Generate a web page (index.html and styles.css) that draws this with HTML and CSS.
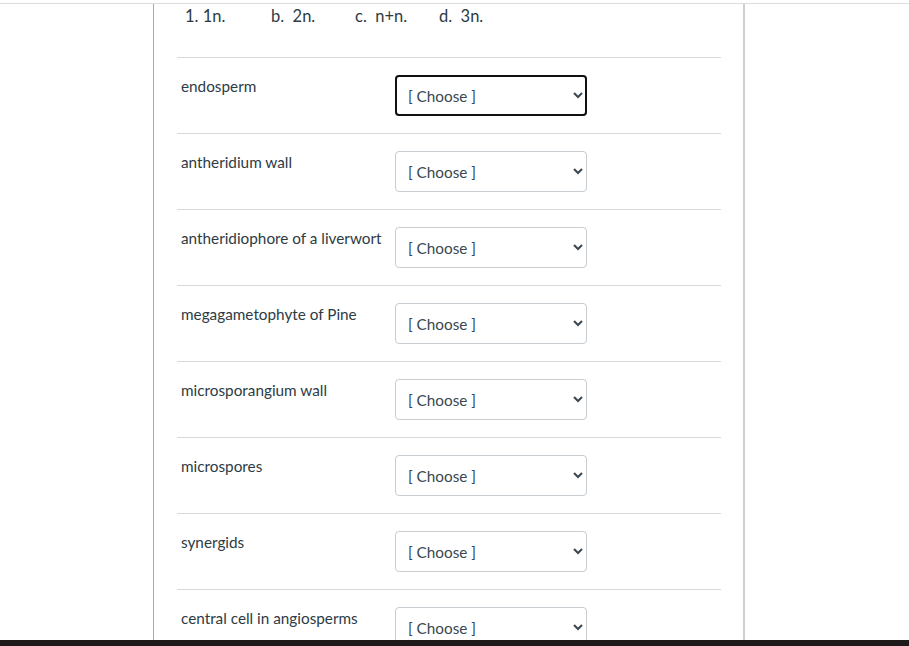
FILE: index.html
```html
<!DOCTYPE html>
<html lang="en">
<head>
<meta charset="utf-8">
<title>Matching question</title>
<link rel="stylesheet" href="styles.css">
</head>
<body>
<div class="topline"></div>
<div class="question">
  <div class="options">
    <span class="opt opt-1">1. 1n.</span>
    <span class="opt opt-b">b.&nbsp; 2n.</span>
    <span class="opt opt-c">c.&nbsp; n+n.</span>
    <span class="opt opt-d">d.&nbsp; 3n.</span>
  </div>
  <div class="rows">
    <div class="row">
      <label class="term">endosperm</label>
      <select class="choice focused"><option>[ Choose ]</option></select>
    </div>
    <div class="row">
      <label class="term">antheridium wall</label>
      <select class="choice"><option>[ Choose ]</option></select>
    </div>
    <div class="row">
      <label class="term">antheridiophore of a liverwort</label>
      <select class="choice"><option>[ Choose ]</option></select>
    </div>
    <div class="row">
      <label class="term">megagametophyte of Pine</label>
      <select class="choice"><option>[ Choose ]</option></select>
    </div>
    <div class="row">
      <label class="term">microsporangium wall</label>
      <select class="choice"><option>[ Choose ]</option></select>
    </div>
    <div class="row">
      <label class="term">microspores</label>
      <select class="choice"><option>[ Choose ]</option></select>
    </div>
    <div class="row">
      <label class="term">synergids</label>
      <select class="choice"><option>[ Choose ]</option></select>
    </div>
    <div class="row">
      <label class="term">central cell in angiosperms</label>
      <select class="choice"><option>[ Choose ]</option></select>
    </div>
  </div>
</div>
<div class="taskbar"></div>
</body>
</html>
```

FILE: styles.css
```css
html, body {
  margin: 0;
  padding: 0;
  background: #ffffff;
  font-family: Lato, "Open Sans", sans-serif;
  color: #2d3b45;
  overflow: hidden;
  height: 646px;
}

.topline {
  height: 3px;
  border-bottom: 1px solid #dcdcdc;
}

.question {
  box-sizing: border-box;
  margin-left: 153px;
  width: 592px;
  border-left: 1px solid #a8a8a8;
  border-right: 2px solid #cfcfcf;
  padding: 0 22px 0 23px;
  min-height: 700px;
}

.options {
  display: flex;
  font-size: 16.5px;
  line-height: 24px;
  padding: 0 0 29px 8px;
  color: #2d3b45;
}

.opt-1 { width: 86px; }
.opt-b { width: 84px; }
.opt-c { width: 84px; }

.row {
  display: flex;
  align-items: flex-start;
  border-top: 1px solid #d7dadd;
  padding: 17px 0 17px 0;
}

.term {
  width: 214px;
  padding: 1px 0 0 4px;
  font-size: 15.3px;
  line-height: 20px;
  color: #2d3b45;
}

.choice {
  width: 192px;
  height: 41px;
  margin: 0;
  padding: 0 6px 0 8px;
  font-family: Lato, "Open Sans", sans-serif;
  font-size: 15.3px;
  color: #3a4750;
  background: #ffffff;
  border: 1px solid #c7cdd1;
  border-radius: 4px;
}

.choice.focused {
  outline: 2px solid #111111;
  outline-offset: -2px;
}

.taskbar {
  position: fixed;
  left: 0;
  right: 0;
  bottom: 0;
  height: 6px;
  background: #1e1a19;
}
```
